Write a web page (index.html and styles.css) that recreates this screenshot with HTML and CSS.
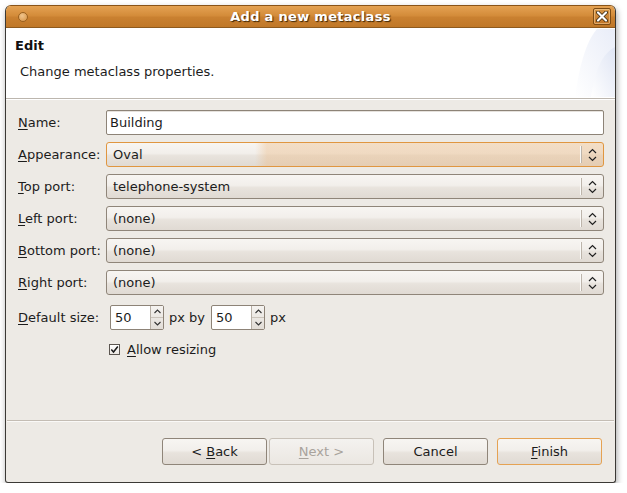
FILE: index.html
```html
<!DOCTYPE html>
<html>
<head>
<meta charset="utf-8">
<link rel="stylesheet" href="styles.css">
</head>
<body>
<div class="window">
  <div class="titlebar">
    <span class="tb-circle"></span>
    <span class="title">Add a new metaclass</span>
    <span class="close">
      <svg width="12" height="11" viewBox="0 0 12 11"><path d="M2 1.5 L10 9.5 M10 1.5 L2 9.5" stroke="#3a2a12" stroke-width="3.8" stroke-linecap="round"/><path d="M2 1.5 L10 9.5 M10 1.5 L2 9.5" stroke="#ffffff" stroke-width="2.2" stroke-linecap="round"/></svg>
    </span>
  </div>
  <div class="header">
    <div class="h-title">Edit</div>
    <div class="h-desc">Change metaclass properties.</div>
    <svg class="swoosh" width="70" height="68" viewBox="0 0 70 68">
      <defs>
        <linearGradient id="g1" x1="0" y1="1" x2="1" y2="0">
          <stop offset="0" stop-color="#ffffff"/>
          <stop offset="1" stop-color="#dfe5f4"/>
        </linearGradient>
        <linearGradient id="g2" x1="0" y1="1" x2="1" y2="0">
          <stop offset="0" stop-color="#ffffff"/>
          <stop offset="1" stop-color="#e9edf8"/>
        </linearGradient>
      </defs>
      <path d="M70 0 L52 0 C40 14 34 40 30 68 L70 68 Z" fill="url(#g2)"/>
      <path d="M70 18 C58 24 50 40 46 68 L70 68 Z" fill="url(#g1)"/>
    </svg>
  </div>
  <div class="form">
    <div class="row">
      <label class="lbl"><u>N</u>ame:</label>
      <div class="entry">Building</div>
    </div>
    <div class="row">
      <label class="lbl"><u>A</u>ppearance:</label>
      <div class="combo focus"><span class="ctext">Oval</span><span class="cbtn"><svg width="9" height="14" viewBox="0 0 9 14"><path d="M1 5 L4.5 1.5 L8 5 M1 9 L4.5 12.5 L8 9" fill="none" stroke="#222" stroke-width="1.2"/></svg></span></div>
    </div>
    <div class="row">
      <label class="lbl"><u>T</u>op port:</label>
      <div class="combo"><span class="ctext">telephone-system</span><span class="cbtn"><svg width="9" height="14" viewBox="0 0 9 14"><path d="M1 5 L4.5 1.5 L8 5 M1 9 L4.5 12.5 L8 9" fill="none" stroke="#222" stroke-width="1.2"/></svg></span></div>
    </div>
    <div class="row">
      <label class="lbl"><u>L</u>eft port:</label>
      <div class="combo"><span class="ctext">(none)</span><span class="cbtn"><svg width="9" height="14" viewBox="0 0 9 14"><path d="M1 5 L4.5 1.5 L8 5 M1 9 L4.5 12.5 L8 9" fill="none" stroke="#222" stroke-width="1.2"/></svg></span></div>
    </div>
    <div class="row">
      <label class="lbl"><u>B</u>ottom port:</label>
      <div class="combo"><span class="ctext">(none)</span><span class="cbtn"><svg width="9" height="14" viewBox="0 0 9 14"><path d="M1 5 L4.5 1.5 L8 5 M1 9 L4.5 12.5 L8 9" fill="none" stroke="#222" stroke-width="1.2"/></svg></span></div>
    </div>
    <div class="row">
      <label class="lbl"><u>R</u>ight port:</label>
      <div class="combo"><span class="ctext">(none)</span><span class="cbtn"><svg width="9" height="14" viewBox="0 0 9 14"><path d="M1 5 L4.5 1.5 L8 5 M1 9 L4.5 12.5 L8 9" fill="none" stroke="#222" stroke-width="1.2"/></svg></span></div>
    </div>
    <div class="row size-row">
      <label class="lbl"><u>D</u>efault size:</label>
      <div class="size-ctl">
        <div class="spin"><span class="stext">50</span><span class="sbtns"><span class="sb"><svg width="7" height="5" viewBox="0 0 7 5"><path d="M0.5 4 L3.5 1 L6.5 4" fill="none" stroke="#333" stroke-width="1.1"/></svg></span><span class="sb"><svg width="7" height="5" viewBox="0 0 7 5"><path d="M0.5 1 L3.5 4 L6.5 1" fill="none" stroke="#333" stroke-width="1.1"/></svg></span></span></div>
        <span class="unit">px by</span>
        <div class="spin"><span class="stext">50</span><span class="sbtns"><span class="sb"><svg width="7" height="5" viewBox="0 0 7 5"><path d="M0.5 4 L3.5 1 L6.5 4" fill="none" stroke="#333" stroke-width="1.1"/></svg></span><span class="sb"><svg width="7" height="5" viewBox="0 0 7 5"><path d="M0.5 1 L3.5 4 L6.5 1" fill="none" stroke="#333" stroke-width="1.1"/></svg></span></span></div>
        <span class="unit">px</span>
      </div>
    </div>
    <div class="check-row">
      <span class="checkbox"><svg width="9" height="9" viewBox="0 0 9 9"><path d="M1.3 4.6 L3.5 7 L7.8 1.5" fill="none" stroke="#1a1a1a" stroke-width="1.5"/></svg></span>
      <span class="ctext2"><u>A</u>llow resizing</span>
    </div>
  </div>
  <div class="sep"></div>
  <div class="buttons">
    <div class="btn"><span>&lt; <u>B</u>ack</span></div>
    <div class="btn disabled"><span><u>N</u>ext &gt;</span></div>
    <div class="btn gap"><span>Cancel</span></div>
    <div class="btn gap default"><span><u>F</u>inish</span></div>
  </div>
</div>
</body>
</html>
```
FILE: styles.css
```css
html, body {
  margin: 0;
  padding: 0;
  background: #ffffff;
}
body {
  font-family: "DejaVu Sans", sans-serif;
  font-size: 13px;
  color: #1c1c1c;
}
u {
  text-decoration: underline;
  text-underline-offset: 2px;
  text-decoration-thickness: 1px;
}
.window {
  margin: 5px 0 0 5px;
  width: 611px;
  height: 478px;
  box-sizing: border-box;
  border: 1px solid #3b3935;
  border-top-color: #8a5418;
  border-radius: 6px 6px 3px 3px;
  background: #edeae5;
  display: flex;
  flex-direction: column;
  overflow: hidden;
  box-shadow: 1px 3px 6px rgba(0, 0, 0, 0.35);
}
.titlebar {
  height: 22px;
  flex: none;
  position: relative;
  display: flex;
  align-items: center;
  justify-content: center;
  background: linear-gradient(#e4a253, #d48c3a 45%, #c98030 55%, #c07828);
  border-bottom: 1px solid #8e5a1e;
  box-sizing: border-box;
}
.title {
  color: #ffffff;
  font-weight: bold;
  font-size: 13px;
  letter-spacing: 0.3px;
  text-shadow: 1px 1px 1px #3c2608;
  margin-left: 0;
}
.tb-circle {
  position: absolute;
  left: 12px;
  top: 6px;
  width: 8px;
  height: 8px;
  border-radius: 50%;
  border: 1px solid #9a6120;
  background: radial-gradient(circle at 40% 35%, #f0c48c, #d69244);
}
.close {
  position: absolute;
  right: 4px;
  top: 2px;
  width: 18px;
  height: 17px;
  box-sizing: border-box;
  border: 1px solid #7d4c14;
  border-radius: 2px;
  box-shadow: inset 0 0 0 1px rgba(255, 220, 170, 0.5);
  background: linear-gradient(#d79748, #c07528);
  display: flex;
  align-items: center;
  justify-content: center;
}
.header {
  height: 71px;
  flex: none;
  position: relative;
  background: #ffffff;
  box-sizing: border-box;
  padding: 10px 0 0 9px;
  border-bottom: 1px solid #bcb6ae;
  box-shadow: 0 1px 0 #ffffff;
}
.h-title {
  font-weight: bold;
  line-height: 16px;
  color: #111;
}
.h-desc {
  margin-top: 10px;
  margin-left: 5px;
  line-height: 16px;
  color: #1c1c1c;
}
.swoosh {
  position: absolute;
  right: 0;
  top: 1px;
}
.form {
  flex: 1;
  padding: 11px 11px 0 12px;
  display: flex;
  flex-direction: column;
  gap: 7px;
}
.row {
  display: flex;
  align-items: center;
  height: 25px;
}
.lbl {
  width: 88px;
  flex: none;
}
.entry {
  flex: 1;
  height: 25px;
  box-sizing: border-box;
  border: 1px solid #8d8377;
  border-radius: 2px;
  background: #ffffff;
  padding-left: 3px;
  line-height: 23px;
  box-shadow: inset 0 1px 0 #e6e2dd;
}
.combo {
  flex: 1;
  height: 25px;
  box-sizing: border-box;
  border: 1px solid #8f8579;
  border-radius: 3px;
  background: linear-gradient(#f7f5f2, #f2efeb 45%, #e8e3dd 55%, #e0dad3);
  display: flex;
  align-items: center;
}
.combo.focus {
  border-color: #e09640;
  background:
    linear-gradient(90deg, rgba(255,255,255,0) 148px, rgba(236,186,132,0.4) 160px),
    linear-gradient(#f7f5f2, #f2efeb 45%, #e8e3dd 55%, #e0dad3);
}
.ctext {
  flex: 1;
  padding-left: 6px;
}
.cbtn {
  width: 21px;
  height: 17px;
  border-left: 1px solid #bdb5ab;
  box-shadow: -1px 0 0 #fbfaf8;
  display: flex;
  align-items: center;
  justify-content: center;
}
.size-row {
  margin-top: 3px;
}
.size-ctl {
  display: flex;
  align-items: center;
  margin-left: 4px;
}
.spin {
  width: 54px;
  height: 25px;
  box-sizing: border-box;
  border: 1px solid #8d8377;
  border-radius: 2px;
  background: #ffffff;
  display: flex;
}
.stext {
  flex: 1;
  padding-left: 4px;
  line-height: 23px;
}
.sbtns {
  width: 12px;
  display: flex;
  flex-direction: column;
  border-left: 1px solid #b7afa5;
  background: linear-gradient(#f5f3f0, #e2ddd7);
}
.sb {
  flex: 1;
  display: flex;
  align-items: center;
  justify-content: center;
}
.sb + .sb {
  border-top: 1px solid #cbc4bb;
}
.unit {
  margin: 0 6px 0 5px;
}
.check-row {
  display: flex;
  align-items: center;
  margin-top: 2px;
  padding-left: 91px;
  height: 20px;
}
.checkbox {
  width: 11px;
  height: 11px;
  box-sizing: border-box;
  border: 1px solid #5c5650;
  background: linear-gradient(#ffffff, #ebe7e2);
  display: flex;
  align-items: center;
  justify-content: center;
}
.ctext2 {
  margin-left: 7px;
}
.sep {
  flex: none;
  height: 1px;
  background: #c4bdb4;
  border-bottom: 1px solid #faf9f7;
  margin: 0 1px;
}
.buttons {
  flex: none;
  display: flex;
  justify-content: flex-end;
  padding: 16px 13px 17px 0;
  gap: 2px;
}
.btn {
  width: 105px;
  height: 27px;
  box-sizing: border-box;
  border: 1px solid #8f8579;
  border-radius: 3px;
  background: linear-gradient(#f7f5f2, #f2efeb 45%, #e8e3dd 55%, #e0dad3);
  display: flex;
  align-items: center;
  justify-content: center;
}
.btn.gap {
  margin-left: 7px;
}
.btn.disabled {
  border-color: #c8c1b8;
  color: #a9a39c;
  background: linear-gradient(#f4f2ef, #ebe7e2);
}
.btn.default {
  border-color: #e5a253;
}
```
